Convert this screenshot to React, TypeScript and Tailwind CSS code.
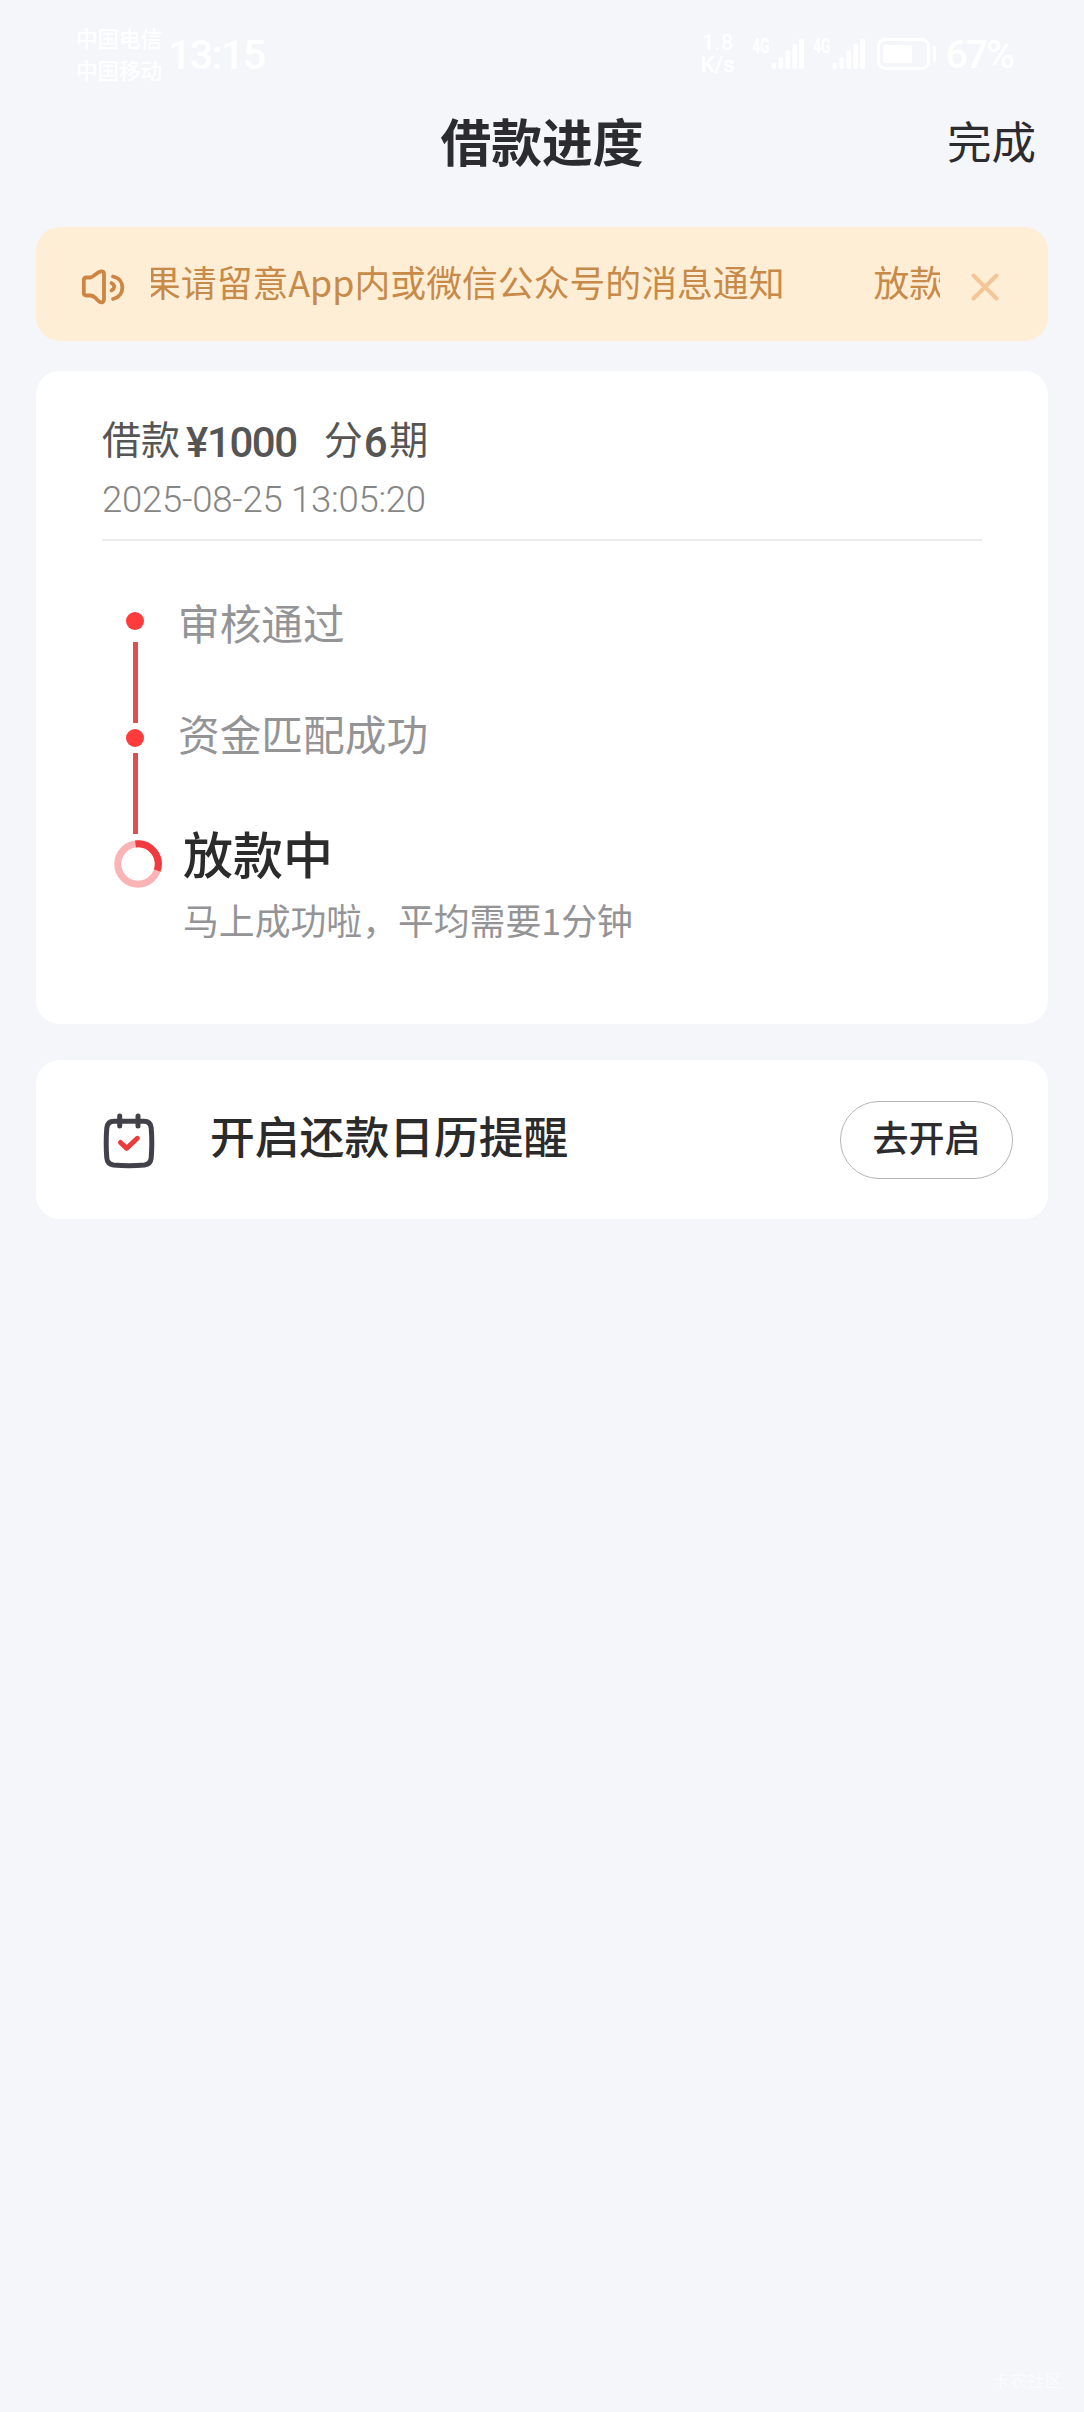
import { useState } from 'react'

type StepItem = { title: string; desc?: string }

const steps: StepItem[] = [
  { title: '审核通过' },
  { title: '资金匹配成功' },
  { title: '放款中', desc: '马上成功啦，平均需要1分钟' },
]

const SignalIcon = () => (
  <svg width="34" height="32" viewBox="0 0 34 32" fill="#fff">
    <rect x="0.5" y="25" width="4.5" height="6" rx="2" />
    <rect x="7.5" y="19" width="4.5" height="12" rx="2" />
    <rect x="14.5" y="12" width="4.5" height="19" rx="2" />
    <rect x="21.5" y="6" width="4.5" height="25" rx="2" />
    <rect x="28" y="0.5" width="5" height="30.5" rx="2" />
  </svg>
)

const BatteryIcon = () => (
  <svg width="60" height="32" viewBox="0 0 60 32" fill="none">
    <rect x="1.5" y="1.5" width="50" height="29" rx="7" stroke="#fff" strokeWidth="3" />
    <rect x="6" y="7" width="29" height="18" rx="2" fill="#fff" />
    <path d="M56 8h1q2 0 2 2v12q0 2-2 2h-1z" fill="#fff" />
  </svg>
)

const SpeakerIcon = () => (
  <svg width="44" height="36" viewBox="0 0 44 36" fill="none" stroke="#cf8542" strokeWidth="3.8" strokeLinecap="round" strokeLinejoin="round">
    <path d="M5.5 8.5H9.5Q11.5 8 13 6.5L17.5 3.3Q23 0.8 23 5V30.5Q23 34.8 18 32.5L14 28.5Q11.5 26.5 9.5 26.5H5.500Q2.800 26.500 2.800 24V11.500Q2.800 8.500 5.500 8.500Z" />
    <path d="M30.500 14Q36 17.500 30.500 21.500" />
    <path d="M32 7.500C44.500 10 44.500 27 32 30" />
  </svg>
)

const CalendarIcon = () => (
  <svg width="54" height="56" viewBox="0 0 54 56" fill="none" strokeLinecap="round" strokeLinejoin="round">
    <path d="M12 8.200H42Q48.500 8.200 49.200 15Q50.400 30 49.200 45Q48.600 51.200 42.500 52Q27 53.600 11.500 52Q5.400 51.200 4.800 45Q3.600 30 4.800 15Q5.500 8.200 12 8.200Z" stroke="#424149" strokeWidth="5" />
    <path d="M17.700 3V13M36 3V13" stroke="#424149" strokeWidth="5" />
    <path d="M18.500 29.500L24.800 35.300L35.300 25.300" stroke="#ec3b3c" strokeWidth="5" />
  </svg>
)

const Spinner = () => (
  <svg width="48" height="48" viewBox="0 0 48 48" fill="none" strokeWidth="7">
    <circle cx="24" cy="24" r="20.2" stroke="#fbb4b6" />
    <path d="M21.500 3.950A20.200 20.200 0 0 1 43.200 30.500" stroke="#f03a40" />
  </svg>
)

export default function App() {
  const [showNotice, setShowNotice] = useState(true)

  return (
    <div className="relative h-[2412px] w-[1084px] overflow-hidden bg-[#f4f6fa] font-['Noto_Sans_CJK_SC',sans-serif] text-[#2c2c30]">
      {/* 状态栏 */}
      <div className="flex h-[108px] items-center pl-[76px] pr-[71px] text-white">
        <div className="flex flex-col text-[21.500px] font-medium leading-[32px]">
          <span>中国电信</span>
          <span>中国移动</span>
        </div>
        <span className="ml-[6px] mt-[2px] font-[Roboto,sans-serif] text-[41px] font-medium leading-none tracking-[-1.500px]">13:15</span>
        <div className="ml-auto flex items-center font-[Roboto,sans-serif]">
          <div className="flex w-[36px] flex-col items-center text-[22px] font-medium leading-[22px]">
            <span className="h-[22px]">1.8</span>
            <span className="h-[22px]">K/s</span>
          </div>
          <div className="ml-[16px] flex">
            <span className="w-[19px] origin-left scale-x-[0.7] text-[20px] font-bold leading-[16px]">4G</span>
            <SignalIcon />
          </div>
          <div className="ml-[8px] flex">
            <span className="w-[19px] origin-left scale-x-[0.7] text-[20px] font-bold leading-[16px]">4G</span>
            <SignalIcon />
          </div>
          <div className="ml-[11px]">
            <BatteryIcon />
          </div>
          <span className="ml-[9px] mt-[2px] text-[39.500px] font-medium leading-none tracking-[-2.200px]">67%</span>
        </div>
      </div>

      {/* 标题栏 */}
      <header className="grid h-[64px] grid-cols-[1fr_auto_1fr] items-center px-[48px]">
        <h1 className="col-start-2 text-[50.800px] font-bold leading-[64px]">借款进度</h1>
        <button className="justify-self-end text-[44.500px] leading-[64px]">完成</button>
      </header>

      <main className="flex flex-col px-[36px] pt-[55px]">
        {/* 通知 */}
        {showNotice && (
          <div className="mb-[30px] flex h-[114px] items-center rounded-[24px] bg-[#ffeed6] pl-[45px] pr-[49px]">
            <div className="mt-[5px]">
              <SpeakerIcon />
            </div>
            <div className="ml-[26px] flex h-[54px] w-[789px] overflow-hidden whitespace-nowrap text-[35.850px] leading-[48px] text-[#c78a48]">
              <span className="-ml-[6px]">果请留意App内或微信公众号的消息通知</span>
              <span className="ml-[89px]">放款</span>
            </div>
            <button className="ml-auto mt-[5px]" onClick={() => setShowNotice(false)}>
              <svg width="28" height="28" viewBox="0 0 28 28" fill="none" stroke="#f4c596" strokeWidth="4" strokeLinecap="round">
                <path d="M2.500 2.500L25.500 25.500M25.500 2.500L2.500 25.500" />
              </svg>
            </button>
          </div>
        )}

        {/* 借款进度 */}
        <section className="h-[653px] rounded-[24px] bg-white px-[66px] pt-[44px]">
          <div className="flex h-[48px] text-[39px] leading-[44px] text-[#555]">
            <span>借款</span>
            <span className="ml-[6px] font-[Roboto,sans-serif] text-[42px] font-medium leading-[55px] tracking-[-1.400px]">¥1000</span>
            <span className="ml-[27px]">分</span>
            <span className="ml-[1px] font-[Roboto,sans-serif] text-[42px] font-medium leading-[55px] tracking-[-1.500px]">6</span>
            <span className="ml-[3px]">期</span>
          </div>
          <div className="mt-[15px] font-[Roboto,sans-serif] text-[36.500px] font-light leading-[44px] tracking-[-0.250px] text-[#858585]">
            2025-08-25 13:05:20
          </div>
          <div className="mt-[17px] h-[2px] bg-[#ebebeb]" />

          <div className="flex pt-[71px]">
            <div className="flex w-[66px] flex-col items-center">
              <div className="h-[18px] w-[18px] rounded-full bg-[#ff3b3c]" />
              <div className="mt-[12px] h-[81px] w-[5px] bg-[#de5050]" />
              <div className="mt-[6px] h-[18px] w-[18px] rounded-full bg-[#ff3b3c]" />
              <div className="mt-[6px] h-[81px] w-[5px] bg-[#de5050]" />
              <div className="ml-[6px] mt-[6px]">
                <Spinner />
              </div>
            </div>
            <div className="ml-[10px] text-[41.700px] leading-[48px] text-[#949497]">
              <p className="-mt-[14px]">{steps[0].title}</p>
              <p className="mt-[63px]">{steps[1].title}</p>
              <div className="ml-[5px] mt-[63px]">
                <p className="text-[50px] font-medium leading-[64px] text-[#2b2b2b]">{steps[2].title}</p>
                <p className="mt-[11px] text-[35.850px] leading-[48px]">{steps[2].desc}</p>
              </div>
            </div>
          </div>
        </section>

        {/* 还款提醒 */}
        <section className="mt-[36px] flex h-[159px] items-center rounded-[24px] bg-white pl-[66px] pr-[35px]">
          <div className="mt-[2px]">
            <CalendarIcon />
          </div>
          <span className="mb-[9px] ml-[54px] text-[44.800px] font-medium leading-[60px] text-[#2b2b2b]">开启还款日历提醒</span>
          <button className="ml-auto flex h-[78px] w-[173px] justify-center rounded-full border-[1.500px] border-[#b5b5b5] pt-[7px] text-[36px] font-medium leading-[54px]">
            去开启
          </button>
        </section>
      </main>

      {/* 水印 */}
      <span className="absolute bottom-[20px] right-[22px] text-[17.500px] leading-[24px] text-white/60">卡农社区</span>
    </div>
  )
}
